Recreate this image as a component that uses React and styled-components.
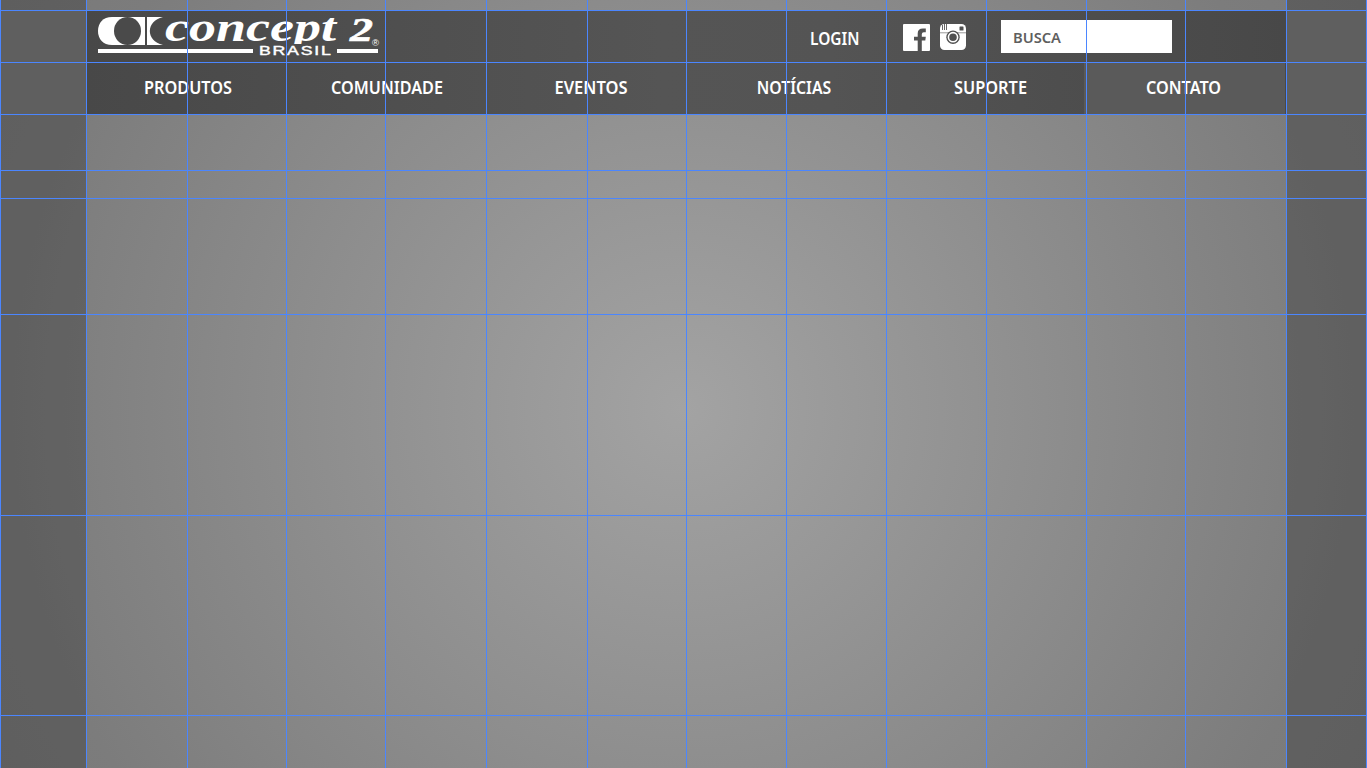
import React from 'react';
import styled, { createGlobalStyle } from 'styled-components';

const Global = createGlobalStyle`
  * { box-sizing: border-box; }
  body { margin: 0; overflow: hidden; font-family: 'Noto Sans', 'Open Sans', sans-serif; }
`;

const Page = styled.div`
  position: relative;
  display: flex;
  width: 1367px;
  height: 768px;
  overflow: hidden;
  background: radial-gradient(circle 790px at 683px 408px, #a3a3a3 0%, #7c7c7c 85%, #797979 100%);
`;

const Side = styled.aside`
  flex: 0 0 ${(p) => p.$width}px;
  padding-top: 11px;
  background: rgba(45, 45, 45, 0.35);
`;

const SideBand = styled.div`
  height: 103px;
  background: #5f5f5f;
`;

const Main = styled.main`
  flex: 1;
  padding-top: 10px;
`;

const Header = styled.header`
  background: linear-gradient(90deg, #484848, #555 48%, #545454 62%, #484848);
`;

const TopBar = styled.div`
  display: flex;
  align-items: flex-start;
  height: 52px;
  padding-left: 11px;
`;

const Logo = styled.svg`
  display: block;
  width: 284px;
  height: 52px;
`;

const Login = styled.a`
  margin: 16px 0 0 429px;
  width: 93px;
  height: 26px;
`;

const Social = styled.svg`
  display: block;
  width: 64px;
  height: 27px;
  margin-top: 14px;
`;

const Search = styled.div`
  width: 171px;
  height: 33px;
  margin: 10px 0 0 34px;
  padding-left: 12px;
  background: #fff;
`;

const Label = styled.text`
  font: 600 ${(p) => p.$size}px 'Noto Sans', 'Open Sans', sans-serif;
`;

const Nav = styled.nav`
  display: grid;
  grid-template-columns: 200px 200px 200px 200px 198px 201px 1fr;
  grid-template-rows: 52px;
`;

const NavItem = styled.a`
  display: block;
  height: 52px;
  background: ${(p) => (p.$active ? '#5a5a5a' : 'transparent')};
`;

const LabelSvg = styled.svg`
  display: block;
  width: 100%;
  height: 100%;
`;

const Guides = styled.svg`
  position: absolute;
  inset: 0;
  pointer-events: none;
`;

const items = [
  ['PRODUTOS', 58, 88],
  ['COMUNIDADE', 45, 112],
  ['EVENTOS', 68.5, 73],
  ['NOTÍCIAS', 70.7, 74.5],
  ['SUPORTE', 68, 73],
  ['CONTATO', 62, 75],
];

const columns = [0, 86, 187, 286, 385, 486, 587, 686, 786, 886, 986, 1086, 1185, 1286, 1366];
const rows = [10, 62, 114, 170, 198, 314, 515, 715];

function BrandLogo() {
  return (
    <Logo viewBox="97 10 284 52" fill="#fff">
      <clipPath id="wordmark"><rect x="160" y="12" width="185" height="32" /></clipPath>
      <path d="M112 17H145V45H112C103 45 98 39 98 31S103 17 112 17Z" />
      <ellipse cx="127.500" cy="31" rx="13.500" ry="14" fill="#4a4a4a" />
      <path d="M147 17H163C145.500 21 145.500 41 163 45H147Z" />
      <g clipPath="url(#wordmark)">
        <text x="165" y="40.500" textLength="171" lengthAdjust="spacingAndGlyphs" fontFamily="'Liberation Serif', serif" fontWeight="700" fontStyle="italic" fontSize="40">concept</text>
      </g>
      <text x="350" y="41" textLength="23" lengthAdjust="spacingAndGlyphs" fontFamily="'Liberation Serif', serif" fontWeight="700" fontStyle="italic" fontSize="33.500" stroke="#fff" strokeWidth=".6">2</text>
      <text x="372" y="46" fontFamily="'Liberation Sans', sans-serif" fontSize="9.500">®</text>
      <rect x="98" y="49" width="155" height="4" />
      <rect x="337" y="49" width="41" height="4" />
      <g transform="translate(259 55) scale(1.450 1)">
        <text x="0" y="0" textLength="49.500" fontFamily="'Liberation Sans', sans-serif" fontSize="12.200" stroke="#fff" strokeWidth=".4">BRASIL</text>
      </g>
    </Logo>
  );
}

export default function App() {
  return (
    <>
      <Global />
      <Page>
        <Side $width={86}><SideBand /></Side>
        <Main>
          <Header>
            <TopBar>
              <BrandLogo />
              <Login>
                <LabelSvg><Label $size={17} x="0" y="19" fill="#fff" textLength="49.5" lengthAdjust="spacingAndGlyphs">LOGIN</Label></LabelSvg>
              </Login>
              <Social viewBox="0 0 64 27" fill="#fff">
                <path d="M1 0H26Q27 0 27 1V26Q27 27 26 27H18.800V16.500H22.300L22.800 12.800H18.800V10.200Q18.800 8.200 20.800 8.200H22.800V4.500H20Q14.700 4.500 14.700 9.500V12.800H11V16.500H14.700V27H1Q0 27 0 26V1Q0 0 1 0Z" />
                <rect x="37" y="0" width="26" height="26" rx="4.500" />
                <path d="M39.500 1V6M41.500 0V6M43.500 0V6" stroke="#666" strokeWidth="1" />
                <path d="M37 8.800H63" stroke="#999" strokeWidth="1" />
                <rect x="56.500" y="2.500" width="4" height="4" rx=".5" fill="#505050" />
                <circle cx="50" cy="13.200" r="6.700" fill="#505050" />
                <circle cx="50" cy="13.200" r="4.600" fill="#505050" stroke="#fff" strokeWidth="1.600" />
              </Social>
              <Search>
                <LabelSvg><Label $size={14.5} x="0" y="23" fill="#5f5f5f" textLength="48" lengthAdjust="spacingAndGlyphs">BUSCA</Label></LabelSvg>
              </Search>
            </TopBar>
            <Nav>
              {items.map(([name, x, w]) => (
                <NavItem key={name} $active={name === 'CONTATO'}>
                  <LabelSvg><Label $size={17} x={x} y="32" fill="#fff" textLength={w} lengthAdjust="spacingAndGlyphs">{name}</Label></LabelSvg>
                </NavItem>
              ))}
            </Nav>
          </Header>
        </Main>
        <Side $width={81}><SideBand /></Side>
        <Guides width="1367" height="768" fill="#4b86ff" shapeRendering="crispEdges">
          {rows.map((y) => <rect key={y} x="0" y={y} width="1367" height="1" />)}
          {columns.map((x) => <rect key={x} x={x} y="0" width="1" height="768" />)}
        </Guides>
      </Page>
    </>
  );
}
